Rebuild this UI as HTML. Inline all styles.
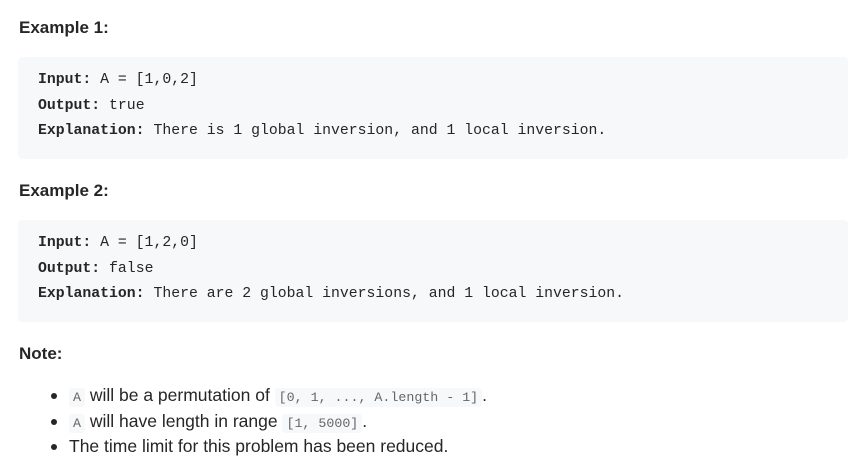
<!DOCTYPE html>
<html><head><meta charset="utf-8"><style>
body{margin:0;background:#fff;width:866px;height:470px;overflow:hidden;font-family:"Liberation Sans",sans-serif;color:#262626}
h3{position:absolute;left:19px;margin:0;font-size:17px;font-weight:bold;color:#262626}
.pre{position:absolute;left:18px;width:830px;height:102px;background:#f7f8fa;border-radius:4px;font-family:"Liberation Mono",monospace;font-size:14.8px;color:#262626}
.pre div{position:absolute;left:20px;white-space:pre}
.pre b{font-weight:bold}
ul{position:absolute;left:0;top:383px;margin:0;padding-left:69px;font-size:17.5px;color:#262626}
li{height:25.5px;line-height:25.5px;padding-left:0}
li::marker{font-size:20px}
code{font-family:"Liberation Mono",monospace;font-size:13.3px;background:#f7f8fa;color:#666;padding:2px 4px;border-radius:3px}
</style></head><body>
<h3 style="top:18px">Example 1:</h3>
<div class="pre" style="top:57px">
<div style="top:15px"><b>Input:</b> A = [1,0,2]</div>
<div style="top:41px"><b>Output:</b> true</div>
<div style="top:66px"><b>Explanation:</b> There is 1 global inversion, and 1 local inversion.</div>
</div>
<h3 style="top:181px">Example 2:</h3>
<div class="pre" style="top:220px">
<div style="top:15px"><b>Input:</b> A = [1,2,0]</div>
<div style="top:41px"><b>Output:</b> false</div>
<div style="top:66px"><b>Explanation:</b> There are 2 global inversions, and 1 local inversion.</div>
</div>
<h3 style="top:344px">Note:</h3>
<ul>
<li><code>A</code> will be a permutation of <code>[0, 1, ..., A.length - 1]</code>.</li>
<li><code>A</code> will have length in range <code>[1, 5000]</code>.</li>
<li>The time limit for this problem has been reduced.</li>
</ul>
</body></html>
